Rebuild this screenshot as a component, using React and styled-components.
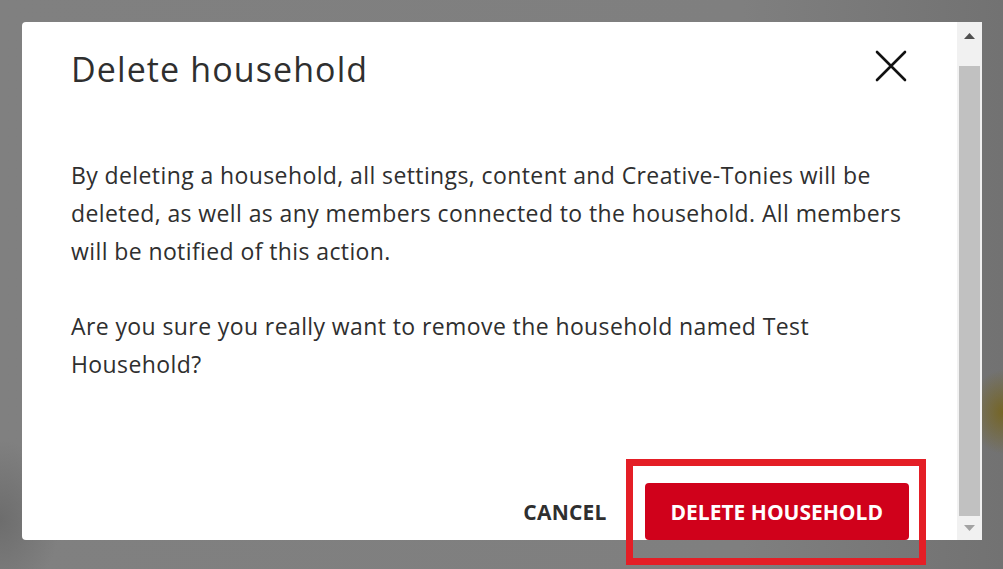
import React from "react";
import styled, { createGlobalStyle } from "styled-components";

const GlobalStyle = createGlobalStyle`
  html, body {
    margin: 0;
    padding: 0;
  }
  body {
    font-family: "Open Sans", "Noto Sans", sans-serif;
    background:
      radial-gradient(ellipse 34px 42px at 1003px 412px, rgba(118, 98, 18, 0.8), rgba(118, 98, 18, 0) 100%),
      radial-gradient(ellipse 60px 80px at 0px 520px, rgba(90, 90, 90, 0.5), rgba(90, 90, 90, 0) 100%),
      linear-gradient(to right, #808080 0%, #7f7f7f 74%, #727272 100%);
    min-height: 100vh;
    overflow: hidden;
  }
`;

const Overlay = styled.div`
  display: flex;
  align-items: flex-start;
  padding: 22px 21px 0 22px;
  height: 569px;
  box-sizing: border-box;
`;

const Dialog = styled.div`
  display: flex;
  width: 960px;
  height: 518px;
  background: #ffffff;
  border-radius: 4px 0 0 4px;
`;

const Content = styled.div`
  flex: 1;
  display: flex;
  flex-direction: column;
  padding: 27px 49px 0 49px;
  min-width: 0;
`;

const Header = styled.header`
  display: flex;
  align-items: center;
  justify-content: space-between;
  height: 40px;
`;

const Title = styled.h2`
  margin: 0;
  font-size: 34px;
  line-height: 40px;
  font-weight: 400;
  letter-spacing: 1.1px;
  color: #2f2f2f;
`;

const CloseButton = styled.button`
  display: flex;
  padding: 0;
  margin: 0 -1px 6px 0;
  border: none;
  background: none;
  cursor: pointer;
`;

const Body = styled.div`
  margin: 67px -13px 0 0;
`;

const Paragraph = styled.p`
  margin: ${(p) => (p.$first ? "0" : "37px")} 0 0 0;
  font-size: 23px;
  line-height: 38px;
  letter-spacing: 0.4px;
  color: #2f2f2f;
`;

const Footer = styled.footer`
  margin-top: auto;
  display: flex;
  justify-content: flex-end;
  align-items: center;
  gap: 22px;
`;

const TextButton = styled.button`
  height: 57px;
  padding: 0 16px;
  border: none;
  background: none;
  font-family: inherit;
  font-size: 21px;
  font-weight: 700;
  letter-spacing: 0.2px;
  color: #2f2f2f;
  cursor: pointer;
`;

const Emphasis = styled.span`
  position: relative;
  display: flex;
  margin-right: -1px;
`;

const DangerButton = styled.button`
  height: 57px;
  padding: 0 26px;
  border: none;
  border-radius: 4px;
  background: #d0011b;
  font-family: inherit;
  font-size: 21px;
  font-weight: 700;
  color: #ffffff;
  cursor: pointer;
`;

const Marker = styled.span`
  position: absolute;
  inset: -24px -17px -25px -19px;
  border: 7px solid #e41e26;
  pointer-events: none;
`;

const ScrollTrack = styled.div`
  width: 25px;
  display: flex;
  flex-direction: column;
  background: #f1f1f1;
`;

const Arrow = styled.div`
  height: ${(p) => p.$h}px;
  display: flex;
  align-items: center;
  justify-content: center;
`;

const Thumb = styled.div`
  flex: 1;
  margin: ${(p) => p.$offset}px 2px 0;
  background: #c1c1c1;
`;

function CloseIcon() {
  return (
    <svg width="36" height="36" viewBox="0 0 36 36" aria-hidden="true">
      <path d="M4 4 L32 32 M32 4 L4 32" stroke="#111" strokeWidth="2.6" strokeLinecap="round" />
    </svg>
  );
}

function Triangle({ up, color }) {
  return (
    <svg width="11" height="6" viewBox="0 0 11 6" aria-hidden="true">
      <path d={up ? "M0 6 L5.5 0 L11 6 Z" : "M0 0 L5.5 6 L11 0 Z"} fill={color} />
    </svg>
  );
}

export default function App() {
  return (
    <>
      <GlobalStyle />
      <Overlay>
        <Dialog role="dialog" aria-labelledby="dlg-title">
          <Content>
            <Header>
              <Title id="dlg-title">Delete household</Title>
              <CloseButton aria-label="Close">
                <CloseIcon />
              </CloseButton>
            </Header>
            <Body>
              <Paragraph $first>
                By deleting a household, all settings, content and Creative-Tonies will be deleted, as well as any
                members connected to the household. All members will be notified of this action.
              </Paragraph>
              <Paragraph>Are you sure you really want to remove the household named Test Household?</Paragraph>
            </Body>
            <Footer>
              <TextButton>CANCEL</TextButton>
              <Emphasis>
                <DangerButton>DELETE HOUSEHOLD</DangerButton>
                <Marker />
              </Emphasis>
            </Footer>
          </Content>
          <ScrollTrack>
            <Arrow $h={27}>
              <Triangle up color="#505050" />
            </Arrow>
            <Thumb $offset={17} />
            <Arrow $h={24}>
              <Triangle color="#a3a3a3" />
            </Arrow>
          </ScrollTrack>
        </Dialog>
      </Overlay>
    </>
  );
}
